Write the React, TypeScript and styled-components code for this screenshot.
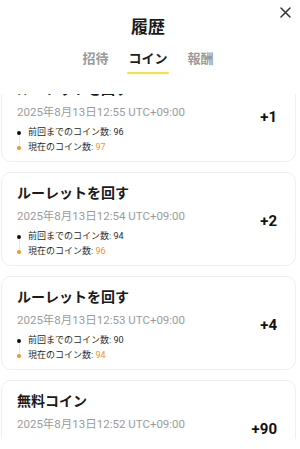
import React, { useLayoutEffect, useRef } from "react";
import styled, { createGlobalStyle } from "styled-components";

const Global = createGlobalStyle`
  html, body { margin: 0; padding: 0; background: #fff; }
  body { font-family: "Roboto", "Noto Sans CJK JP", sans-serif; color: #1a1a1a; }
  * { box-sizing: border-box; }
`;

const Page = styled.div`
  position: relative;
  width: 296px;
  height: 449px;
  display: flex;
  flex-direction: column;
  padding-bottom: 10px;
  background: #fff;
`;

const CloseButton = styled.button`
  position: absolute;
  top: 2px;
  right: 1px;
  width: 20px;
  height: 20px;
  padding: 0;
  border: none;
  background: transparent;
  display: flex;
  align-items: center;
  justify-content: center;
`;

const Header = styled.header`
  display: flex;
  flex-direction: column;
  align-items: center;
  padding-top: 14px;
  flex: none;
`;

const Title = styled.h1`
  margin: 0;
  font-family: "Noto Sans CJK JP", sans-serif;
  font-size: 17px;
  line-height: 24px;
  font-weight: 700;
  color: #1a1a1a;
`;

const Tabs = styled.nav`
  display: flex;
  gap: 20px;
  margin-top: 10px;
  margin-bottom: 20px;
`;

const Tab = styled.div<{ $active?: boolean }>`
  display: flex;
  flex-direction: column;
  align-items: center;
  font-family: "Noto Sans CJK JP", sans-serif;
  font-size: 13px;
  line-height: 20px;
  font-weight: 700;
  color: ${(p) => (p.$active ? "#1e1e1e" : "#9a9a9a")};
  &::after {
    content: "";
    display: block;
    margin-top: 4px;
    width: calc(100% + 2px);
    height: 2px;
    border-radius: 1px;
    background: ${(p) => (p.$active ? "#fbe03c" : "transparent")};
  }
`;

const List = styled.div`
  flex: 1;
  min-height: 0;
  overflow-y: auto;
  scrollbar-width: none;
  &::-webkit-scrollbar { display: none; }
  display: flex;
  flex-direction: column;
  gap: 10px;
  padding: 10px 0 10px 1px;
`;

const Card = styled.div`
  flex: none;
  height: 94px;
  display: flex;
  align-items: center;
  justify-content: space-between;
  padding: 9px 18px 8px 15px;
  border: 1px solid #efefef;
  border-radius: 10px;
  background: #fff;
`;

const Info = styled.div`
  display: flex;
  flex-direction: column;
  align-self: stretch;
`;

const CardTitle = styled.div`
  font-family: "Noto Sans CJK JP", sans-serif;
  font-size: 14px;
  line-height: 20px;
  font-weight: 700;
  color: #1a1a1a;
`;

const DateText = styled.div`
  margin-top: 6px;
  font-size: 11.5px;
  line-height: 16px;
  color: #9b9b9b;
`;

const Timeline = styled.div`
  position: relative;
  margin-top: 5px;
  display: flex;
  flex-direction: column;
  &::before {
    content: "";
    position: absolute;
    left: 1.5px;
    top: 8px;
    height: 15px;
    width: 1px;
    background: #e6e6e6;
  }
`;

const Step = styled.div`
  display: flex;
  align-items: center;
  gap: 7px;
  font-size: 9px;
  line-height: 15px;
  color: #2a2a2a;
`;

const Dot = styled.span<{ $orange?: boolean }>`
  width: 4px;
  height: 4px;
  border-radius: 50%;
  background: ${(p) => (p.$orange ? "#f7931e" : "#111")};
  position: relative;
  z-index: 1;
`;

const Value = styled.span<{ $orange?: boolean }>`
  color: ${(p) => (p.$orange ? "#f7931e" : "#2a2a2a")};
`;

const Amount = styled.div`
  font-size: 15px;
  font-weight: 700;
  color: #111;
  margin-top: 2px;
`;

type Item = { title: string; date: string; prev: number; now: number; diff: number };

const items: Item[] = [
  { title: "ルーレットを回す", date: "2025年8月13日12:55 UTC+09:00", prev: 96, now: 97, diff: 1 },
  { title: "ルーレットを回す", date: "2025年8月13日12:54 UTC+09:00", prev: 94, now: 96, diff: 2 },
  { title: "ルーレットを回す", date: "2025年8月13日12:53 UTC+09:00", prev: 90, now: 94, diff: 4 },
  { title: "無料コイン", date: "2025年8月13日12:52 UTC+09:00", prev: 0, now: 90, diff: 90 },
];

export default function App() {
  const listRef = useRef<HTMLDivElement>(null);
  useLayoutEffect(() => {
    if (listRef.current) listRef.current.scrollTop = 36;
  }, []);
  return (
    <Page>
      <Global />
      <CloseButton aria-label="close">
        <svg width="11" height="11" viewBox="0 0 11 11">
          <path d="M1 1L10 10M10 1L1 10" stroke="#333" strokeWidth="1.5" strokeLinecap="round" />
        </svg>
      </CloseButton>
      <Header>
        <Title>履歴</Title>
        <Tabs>
          <Tab>招待</Tab>
          <Tab $active>コイン</Tab>
          <Tab>報酬</Tab>
        </Tabs>
      </Header>
      <List ref={listRef}>
        {items.map((it, i) => (
          <Card key={i}>
            <Info>
              <CardTitle>{it.title}</CardTitle>
              <DateText>{it.date}</DateText>
              <Timeline>
                <Step>
                  <Dot />
                  <span>
                    前回までのコイン数: <Value>{it.prev}</Value>
                  </span>
                </Step>
                <Step>
                  <Dot $orange />
                  <span>
                    現在のコイン数: <Value $orange>{it.now}</Value>
                  </span>
                </Step>
              </Timeline>
            </Info>
            <Amount>+{it.diff}</Amount>
          </Card>
        ))}
      </List>
    </Page>
  );
}
